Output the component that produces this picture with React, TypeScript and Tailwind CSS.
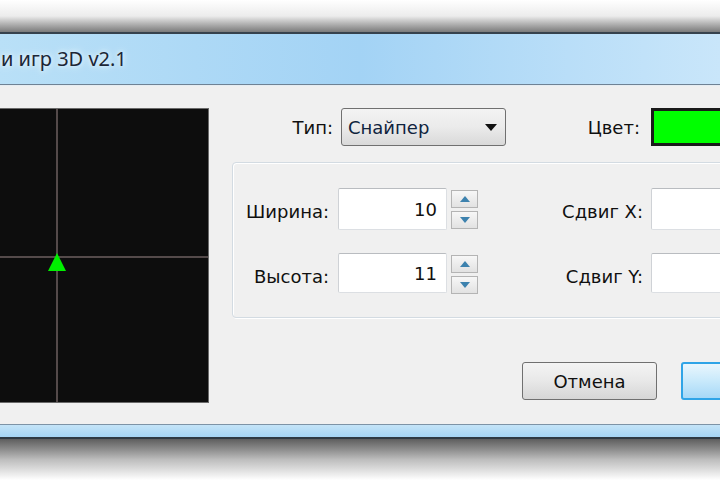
import React from "react";

const ui = { fontFamily: '"DejaVu Sans", Verdana, sans-serif' };

function Spinner() {
  return (
    <div className="flex flex-col gap-[3px] w-[27px] ml-[4px] mt-[2px]">
      {[0, 1].map((i) => (
        <div
          key={i}
          className="h-[18px] border border-[#b4b4b4] bg-gradient-to-b from-[#f7f7f7] to-[#e2e2e2] flex items-center justify-center"
        >
          <svg width="10" height="6" viewBox="0 0 10 6">
            {i === 0 ? (
              <polygon points="5,0 10,6 0,6" fill="#3d82ae" />
            ) : (
              <polygon points="0,0 10,0 5,6" fill="#3d82ae" />
            )}
          </svg>
        </div>
      ))}
    </div>
  );
}

function TextBox({ value, className }: { value?: string; className: string }) {
  return (
    <div
      className={`bg-white border border-[#dcdfe3] border-t-[#b9bcc0] border-l-[#cfd2d6] rounded-[2px] flex items-center justify-end pr-[9px] text-[18px] text-[#101010] ${className}`}
    >
      {value}
    </div>
  );
}

export default function App() {
  return (
    <div className="w-[720px] h-[480px] overflow-hidden bg-white flex flex-col" style={ui}>
      {/* top shadow */}
      <div className="h-[32px] bg-gradient-to-b from-white via-[#ececec] to-[#7b7b7b]" />
      <div className="h-[2px] bg-[#36424d]" />
      {/* title bar */}
      <div className="h-[50px] bg-gradient-to-r from-[#b9e0f7] via-[#a3d3f5] to-[#c9e6fa] flex items-center">
        <div
          className="whitespace-nowrap text-[20px] text-[#1c2636] pb-[1px] ml-[1px]"
          style={{ fontFamily: '"Noto Sans", "Open Sans", sans-serif', textShadow: "0 0 8px #eaf6ff, 0 0 4px #eaf6ff" }}
        >
          и игр 3D v2.1
        </div>
      </div>
      <div className="h-[1px] bg-[#6f8294]" />
      <div className="h-[1px] bg-[#e6edf2]" />
      {/* content */}
      <div className="h-[338px] bg-[#f0f0f0] flex">
        {/* preview canvas */}
        <div className="mt-[22px] w-[209px] h-[295px] bg-[#0d0d0d] border-r border-b border-t border-[#6a6a6a] flex flex-col">
          <div className="flex h-[147px]">
            <div className="w-[56px]" />
            <div className="w-[2px] bg-[#544a4a]" />
          </div>
          <div className="h-[2px] bg-[#544a4a]" />
          <div className="flex flex-1 relative">
            <div className="w-[56px]" />
            <div className="w-[2px] bg-[#544a4a]" />
            <svg className="absolute left-[47px] top-[-5px]" width="20" height="19" viewBox="0 0 20 19">
              <polygon points="10,0 19,18 1,18" fill="#00f000" />
            </svg>
          </div>
        </div>
        {/* right side */}
        <div className="ml-[23px] flex-1 flex flex-col -mr-[20px]">
          {/* row 1 */}
          <div className="mt-[22px] h-[38px] flex items-center text-[18px] text-[#101010]">
            <div className="w-[101px] text-right">Тип:</div>
            <div className="ml-[8px] w-[165px] h-[38px] rounded-[3px] border border-[#707070] bg-gradient-to-b from-[#f3f3f3] via-[#ebebeb] to-[#d9d9d9] flex items-center pl-[6px] pr-[8px] justify-between text-[#10243e]">
              <span>Снайпер</span>
              <svg width="12" height="7" viewBox="0 0 12 7">
                <polygon points="0,0 12,0 6,7" fill="#111" />
              </svg>
            </div>
            <div className="w-[134px] text-right">Цвет:</div>
            <div className="ml-[11px] flex-1 h-[38px] border-[3px] border-[#1a1a1a] bg-[#00ff00]" />
          </div>
          {/* group box */}
          <div className="mt-[16px] h-[156px] rounded-[4px] border border-[#d3dbe2] shadow-[inset_1px_1px_0_#ffffff,1px_1px_0_#ffffff] flex flex-col text-[18px] text-[#101010]">
            <div className="mt-[25px] flex items-start">
              <div className="w-[96px] text-right mt-[10px]">Ширина:</div>
              <TextBox value="10" className="ml-[9px] w-[109px] h-[42px]" />
              <Spinner />
              <div className="w-[165px] text-right mt-[10px]">Сдвиг X:</div>
              <TextBox className="ml-[8px] flex-1 h-[42px]" />
            </div>
            <div className="mt-[23px] flex items-start">
              <div className="w-[96px] text-right mt-[10px]">Высота:</div>
              <TextBox value="11" className="ml-[9px] w-[109px] h-[40px]" />
              <Spinner />
              <div className="w-[165px] text-right mt-[10px]">Сдвиг Y:</div>
              <TextBox className="ml-[8px] flex-1 h-[40px]" />
            </div>
          </div>
          {/* buttons */}
          <div className="mt-[44px] flex text-[18px] text-[#101010]">
            <div className="ml-[290px] w-[135px] h-[38px] rounded-[3px] border border-[#707070] bg-gradient-to-b from-[#f4f4f4] via-[#e8e8e8] to-[#d6d6d6] flex items-center justify-center">
              Отмена
            </div>
            <div className="ml-[24px] flex-1 h-[38px] rounded-[3px] border-[2px] border-[#2fa4e7] bg-gradient-to-b from-[#e9f6fd] via-[#c8e9fb] to-[#a6d8f7]" />
          </div>
        </div>
      </div>
      {/* bottom frame */}
      <div className="h-[1px] bg-[#7d93a6]" />
      <div className="h-[12px] bg-gradient-to-b from-[#c4e4f8] to-[#a5d5f5]" />
      <div className="h-[2px] bg-[#2f3a44]" />
      <div className="flex-1 bg-gradient-to-b from-[#5e5e5e] via-[#bdbdbd] to-white" />
    </div>
  );
}
